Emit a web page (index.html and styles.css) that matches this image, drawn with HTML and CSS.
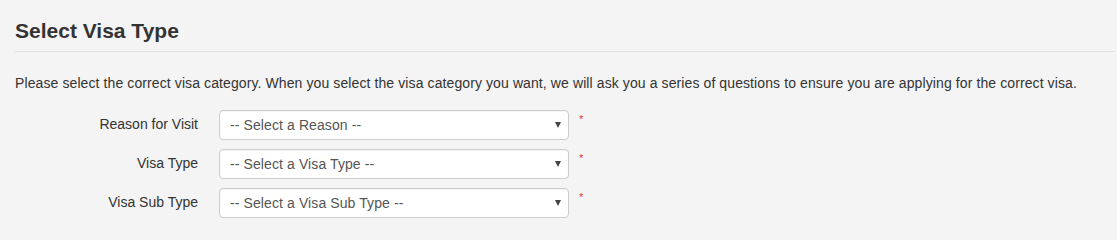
FILE: index.html
```html
<!DOCTYPE html>
<html>
<head>
<meta charset="utf-8">
<link rel="stylesheet" href="styles.css">
</head>
<body>
<div class="page">
  <h2 class="title">Select Visa Type</h2>
  <p class="intro">Please select the correct visa category. When you select the visa category you want, we will ask you a series of questions to ensure you are applying for the correct visa.</p>
  <form class="form">
    <div class="row">
      <label class="label">Reason for Visit</label>
      <div class="select-wrap">
        <select class="select"><option>-- Select a Reason --</option></select>
        <span class="caret"></span>
      </div>
      <span class="req">*</span>
    </div>
    <div class="row">
      <label class="label">Visa Type</label>
      <div class="select-wrap">
        <select class="select"><option>-- Select a Visa Type --</option></select>
        <span class="caret"></span>
      </div>
      <span class="req">*</span>
    </div>
    <div class="row">
      <label class="label">Visa Sub Type</label>
      <div class="select-wrap">
        <select class="select"><option>-- Select a Visa Sub Type --</option></select>
        <span class="caret"></span>
      </div>
      <span class="req">*</span>
    </div>
  </form>
</div>
</body>
</html>
```
FILE: styles.css
```css
html, body {
  margin: 0;
  padding: 0;
  background: #f4f4f4;
}
body {
  font-family: "Liberation Sans", Arial, sans-serif;
  font-size: 14px;
  line-height: 1.42857;
  color: #333;
}
.page {
  padding: 0 3px 0 15px;
}
.title {
  margin: 20px 0 0;
  padding-bottom: 9px;
  font-size: 21px;
  line-height: 22px;
  font-weight: bold;
  color: #333;
  border-bottom: 1px solid #e0e0e0;
}
.intro {
  margin: 22px 0 18px;
  letter-spacing: 0.1px;
  line-height: 18px;
}
.form {
  display: flex;
  flex-direction: column;
  gap: 9px;
}
.row {
  display: grid;
  grid-template-columns: 183px 350px auto;
  column-gap: 21px;
  align-items: center;
}
.label {
  text-align: right;
  color: #333;
}
.select-wrap {
  position: relative;
  height: 30px;
}
.select {
  -webkit-appearance: none;
  appearance: none;
  display: block;
  width: 100%;
  height: 30px;
  margin: 0;
  padding: 0 24px 0 10px;
  font-family: "Liberation Sans", Arial, sans-serif;
  font-size: 14px;
  letter-spacing: 0.1px;
  color: #555;
  background: #fff;
  border: 1px solid #ccc;
  border-radius: 4px;
  box-shadow: inset 0 1px 1px rgba(0,0,0,0.05);
}
.caret {
  position: absolute;
  right: 8px;
  top: 12px;
  width: 0;
  height: 0;
  border-left: 3.5px solid transparent;
  border-right: 3.5px solid transparent;
  border-top: 6px solid #444;
}
.req {
  align-self: start;
  margin-left: -11px;
  margin-top: 3px;
  color: #e33;
  font-size: 11px;
  line-height: 12px;
}
```
